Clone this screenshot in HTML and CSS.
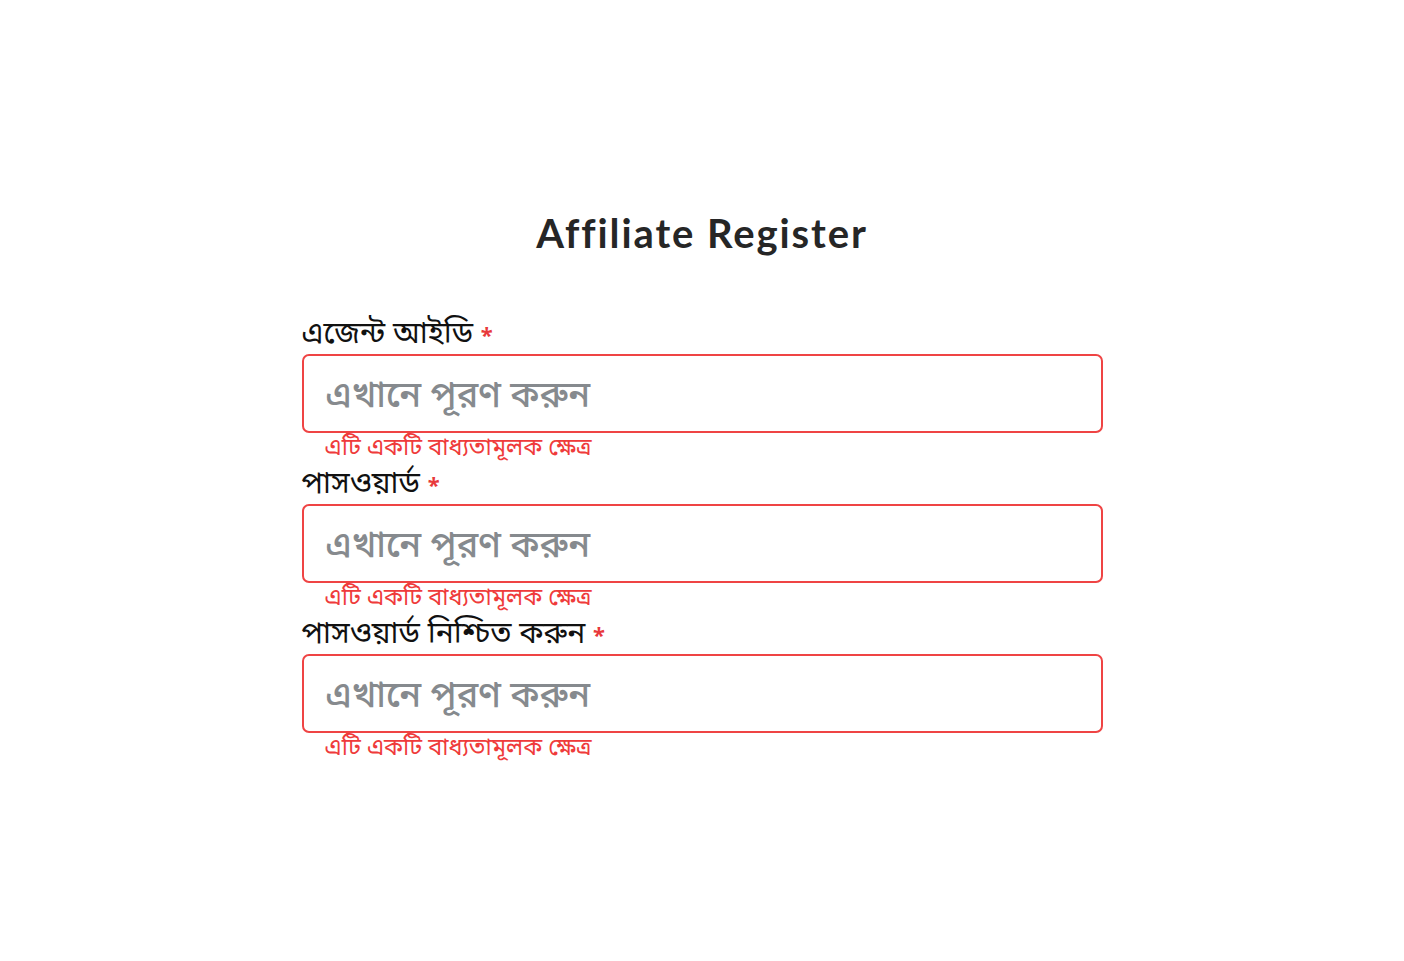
FILE: index.html
```html
<!DOCTYPE html>
<html lang="bn">
<head>
<meta charset="utf-8">
<title>Affiliate Register</title>
<link rel="stylesheet" href="styles.css">
</head>
<body>
<main class="page">
  <h1 class="title">Affiliate Register</h1>
  <form class="form">
    <div class="field">
      <label class="label">এজেন্ট আইডি <span class="req">*</span></label>
      <input class="input" type="text" placeholder="এখানে পূরণ করুন">
      <div class="error">এটি একটি বাধ্যতামূলক ক্ষেত্র</div>
    </div>
    <div class="field">
      <label class="label">পাসওয়ার্ড <span class="req">*</span></label>
      <input class="input" type="password" placeholder="এখানে পূরণ করুন">
      <div class="error">এটি একটি বাধ্যতামূলক ক্ষেত্র</div>
    </div>
    <div class="field">
      <label class="label">পাসওয়ার্ড নিশ্চিত করুন <span class="req">*</span></label>
      <input class="input" type="password" placeholder="এখানে পূরণ করুন">
      <div class="error">এটি একটি বাধ্যতামূলক ক্ষেত্র</div>
    </div>
  </form>
</main>
</body>
</html>
```
FILE: styles.css
```css
* { box-sizing: border-box; }
html, body { margin: 0; padding: 0; background: #fff; }
body { font-family: "Noto Sans", "Noto Sans Bengali", "Lato", sans-serif; color: #1f1f1f; }
.page {
  display: flex;
  flex-direction: column;
  align-items: center;
  padding-top: 206px;
}
.title {
  margin: 0;
  font-family: "Lato", sans-serif;
  font-weight: 700;
  font-size: 40px;
  line-height: 54px;
  color: #262626;
  letter-spacing: 1.9px;
}
.form {
  width: 801px;
  margin-top: 52px;
  display: flex;
  flex-direction: column;
}
.field {
  display: flex;
  flex-direction: column;
  height: 150px;
}
.label {
  font-size: 30px;
  line-height: 40px;
  color: #111;
}
.req { color: #e8393b; font-size: 22px; font-weight: 700; }
.input {
  height: 79px;
  width: 100%;
  border: 2px solid #ef4444;
  border-radius: 7px;
  padding: 0 22px;
  font-size: 36px;
  font-family: inherit;
  outline: none;
  margin-top: 0;
}
.input::placeholder { color: #868a8e; font-weight: 500; }
.error {
  color: #ef3b3b;
  font-size: 23.5px;
  line-height: 28px;
  padding-left: 23px;
  margin-top: -1px;
}
```
